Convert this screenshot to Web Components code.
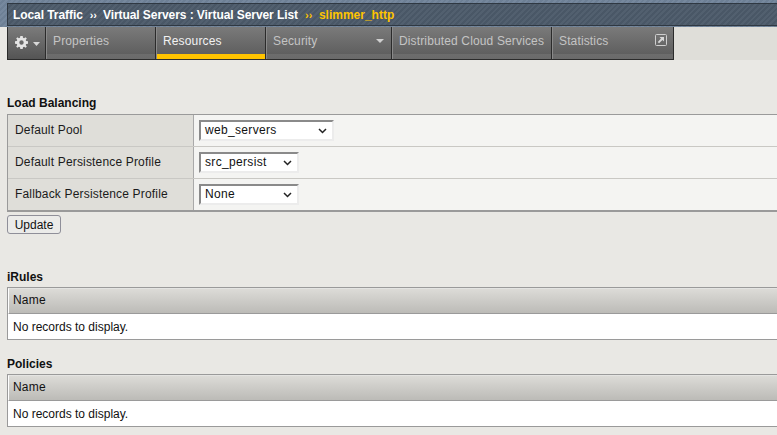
<!DOCTYPE html>
<html>
<head>
<meta charset="utf-8">
<title>Virtual Server List</title>
<style>
html,body{margin:0;padding:0;height:100%;overflow:hidden;}
body{background:#e9e8e4;font:12px "Liberation Sans",Arial,sans-serif;color:#111;}
page-content{display:block;padding:0 0 0 7px;}
</style>
</head>
<body>
<bigip-header>
	<crumb-item>Local Traffic</crumb-item>
	<crumb-item sep>Virtual Servers : Virtual Server List</crumb-item>
	<crumb-item sep current>slimmer_http</crumb-item>
</bigip-header>
<tab-bar>
	<gear-tab></gear-tab>
	<nav-tab width="110">Properties</nav-tab>
	<nav-tab width="110" active>Resources</nav-tab>
	<nav-tab width="126" menu>Security</nav-tab>
	<nav-tab width="160">Distributed Cloud Services</nav-tab>
	<nav-tab width="121" popout>Statistics</nav-tab>
</tab-bar>
<page-content>
	<section-title style="margin-top:36px;height:18px">Load Balancing</section-title>
	<form-table>
		<form-row label="Default Pool"><fake-select width="135">web_servers</fake-select></form-row>
		<form-row label="Default Persistence Profile"><fake-select width="100">src_persist</fake-select></form-row>
		<form-row label="Fallback Persistence Profile"><fake-select width="100">None</fake-select></form-row>
	</form-table>
	<plain-button>Update</plain-button>
	<section-title style="margin-top:36px">iRules</section-title>
	<list-table></list-table>
	<section-title style="margin-top:17px">Policies</section-title>
	<list-table></list-table>
</page-content>
<script>
const stripes=`repeating-linear-gradient(135deg,rgba(255,255,255,.035) 0 2px,rgba(0,0,0,.035) 2px 4px)`;

class BigipHeader extends HTMLElement{
	constructor(){
		super();
		this.attachShadow({mode:'open'}).innerHTML=`
<style>
:host{display:block;height:27px;box-sizing:border-box;padding:3px 0 0 7px;background:${stripes},#71849a;}
#bar{height:23px;box-sizing:border-box;border-top:1px solid #2f3842;border-bottom:1px solid #2f3842;border-left:1px solid #2f3842;margin-bottom:1px;
	background:${stripes},#4c5a6a;display:flex;align-items:center;padding-left:5px;
	color:#fff;font:bold 12px "Liberation Sans",Arial,sans-serif;}
</style>
<div id="bar"><slot></slot></div>`;
	}
}
customElements.define('bigip-header',BigipHeader);

class CrumbItem extends HTMLElement{
	constructor(){
		super();
		this.attachShadow({mode:'open'}).innerHTML=`
<style>
:host{display:inline-flex;align-items:center;letter-spacing:-.07px;}
:host([current]){color:#ffc400;letter-spacing:0;}
#sep{display:none;margin:0 6px 0 7px;font-size:11px;}
:host([sep]) #sep{display:inline;}
:host([current]) #sep{color:#ffc400;margin-right:6.5px;}
</style>
<span id="sep">››</span><slot></slot>`;
	}
}
customElements.define('crumb-item',CrumbItem);

class TabBar extends HTMLElement{
	constructor(){
		super();
		this.attachShadow({mode:'open'}).innerHTML=`
<style>
:host{display:flex;height:33px;box-sizing:border-box;margin-left:7px;background:#dfded9;}
#tabs{display:flex;height:33px;box-sizing:border-box;border:1px solid #2b2b2b;border-top:none;border-left:1px solid #2b2b2b;}
</style>
<div id="tabs"><slot></slot></div>`;
	}
}
customElements.define('tab-bar',TabBar);

class GearTab extends HTMLElement{
	constructor(){
		super();
		this.attachShadow({mode:'open'}).innerHTML=`
<style>
:host{display:flex;align-items:center;box-sizing:border-box;width:38px;padding:0 0 2px 7px;gap:5px;
	border-right:1px solid #2b2b2b;background:linear-gradient(#7b7b7b,#545454);}
svg{display:block;}
</style>
<svg width="13" height="13" viewBox="0 0 13 13"><path fill="#e4e4e4" d="M5.3 0h2.4l.3 1.8 1.1.5L10.600 1.200l1.200 1.200-1.100 1.500.5 1.100 1.800.3v2.400l-1.800.3-.5 1.100 1.100 1.500-1.200 1.200-1.500-1.100-1.100.5-.3 1.800H5.300l-.3-1.800-1.100-.5-1.500 1.100L1.200 10.600l1.100-1.500-.5-1.100L0 7.700V5.300l1.800-.3.5-1.100L1.200 2.400l1.200-1.200 1.500 1.100 1.100-.5zM6.500 4.300a2.200 2.200 0 1 0 0 4.400 2.200 2.200 0 0 0 0-4.400z"/></svg>
<svg width="7" height="4" viewBox="0 0 7 4" style="margin-top:3px"><path fill="#d8d8d8" d="M0 0h7L3.500 4z"/></svg>`;
	}
}
customElements.define('gear-tab',GearTab);

class NavTab extends HTMLElement{
	constructor(){
		super();
		this.attachShadow({mode:'open'}).innerHTML=`
<style>
:host{display:flex;box-sizing:border-box;position:relative;padding:0 0 0 6px;height:32px;align-items:flex-start;
	border-right:1px solid #2b2b2b;border-left:1px solid #8a8a8a;
	background:linear-gradient(#7a7a7a,#5f5f5f 27px,#6d6d6d 27px,#6a6a6a);
	color:#c4c4c4;font:12px "Liberation Sans",Arial,sans-serif;line-height:14px;letter-spacing:.14px;}
:host(:last-child){border-right:none;}
:host([active]){color:#f2f2f2;border-left-color:#8a8a8a;background:linear-gradient(#7a7a7a,#5f5f5f 27px,#ffc400 27px);}
#t{padding-top:7px;}
#caret{display:none;position:absolute;right:7px;top:12px;}
:host([menu]) #caret{display:block;}
#pop{display:none;position:absolute;right:6px;top:7px;}
:host([popout]) #pop{display:block;}
</style>
<span id="t"><slot></slot></span>
<svg id="caret" width="8" height="4" viewBox="0 0 8 4"><path fill="#d0d0d0" d="M0 0h8L4 4z"/></svg>
<svg id="pop" width="12" height="12" viewBox="0 0 12 12"><rect x=".5" y=".5" width="11" height="11" rx="1" fill="none" stroke="#cfcfcf"/><path fill="#d8d8d8" d="M4.500 3h4.500v4.500L7.500 6 4 9.300 2.800 8 6 4.500z"/></svg>`;
	}
	connectedCallback(){
		this.style.width=this.getAttribute('width')+'px';
	}
}
customElements.define('nav-tab',NavTab);

class SectionTitle extends HTMLElement{
	constructor(){
		super();
		this.attachShadow({mode:'open'}).innerHTML=`
<style>
:host{display:block;font:bold 12px "Liberation Sans",Arial,sans-serif;line-height:14px;color:#111;height:17px;}
</style>
<slot></slot>`;
	}
}
customElements.define('section-title',SectionTitle);

class FormTable extends HTMLElement{
	constructor(){
		super();
		this.attachShadow({mode:'open'}).innerHTML=`
<style>
:host{display:block;box-sizing:border-box;border:1px solid #9a9a9a;border-right:none;border-bottom:2px solid #9a9a9a;}
</style>
<slot></slot>`;
	}
}
customElements.define('form-table',FormTable);

class FormRow extends HTMLElement{
	constructor(){
		super();
		this.attachShadow({mode:'open'}).innerHTML=`
<style>
:host{display:grid;grid-template-columns:186px 1fr;height:32px;box-sizing:border-box;border-bottom:1px solid #c9c8c4;font:12px "Liberation Sans",Arial,sans-serif;}
:host(:last-child){height:31px;border-bottom:none;}
#l{background:#dfded9;border-right:1px solid #a9a9a9;padding:0 0 2px 7px;display:flex;align-items:center;color:#1b1b1b;letter-spacing:.17px;}
#v{background:#f4f4f2;padding-left:5px;display:flex;align-items:center;}
</style>
<div id="l"></div><div id="v"><slot></slot></div>`;
	}
	connectedCallback(){
		this.shadowRoot.getElementById('l').textContent=this.getAttribute('label');
	}
}
customElements.define('form-row',FormRow);

class FakeSelect extends HTMLElement{
	constructor(){
		super();
		this.attachShadow({mode:'open'}).innerHTML=`
<style>
:host{display:flex;align-items:center;position:relative;box-sizing:border-box;height:21px;padding:0 0 1px 4px;background:#fff;
	border:2px solid;border-color:#8a8a8a #ececec #ececec #8a8a8a;color:#111;font:12px "Liberation Sans",Arial,sans-serif;letter-spacing:.33px;}
svg{position:absolute;right:5px;top:6px;}
</style>
<slot></slot>
<svg width="9" height="6" viewBox="0 0 9 6"><path fill="none" stroke="#222" stroke-width="1.500" d="M1 1l3.500 3.500L8 1"/></svg>`;
	}
	connectedCallback(){
		this.style.width=this.getAttribute('width')+'px';
	}
}
customElements.define('fake-select',FakeSelect);

class PlainButton extends HTMLElement{
	constructor(){
		super();
		this.attachShadow({mode:'open'}).innerHTML=`
<style>
:host{display:flex;align-items:center;justify-content:center;box-sizing:border-box;width:54px;height:19px;margin-top:3px;
	border:1px solid #8f8f99;border-radius:3px;background:#ebebe9;color:#111;font:12px "Liberation Sans",Arial,sans-serif;}
</style>
<slot></slot>`;
	}
}
customElements.define('plain-button',PlainButton);

class ListTable extends HTMLElement{
	constructor(){
		super();
		this.attachShadow({mode:'open'}).innerHTML=`
<style>
:host{display:block;box-sizing:border-box;height:53px;border:1px solid #9a9a9a;border-right:none;font:12px "Liberation Sans",Arial,sans-serif;color:#111;background:#fff;}
#h{height:26px;box-sizing:border-box;border-bottom:1px solid #9a9a9a;border-left:1px solid #fff;border-top:1px solid #e4e4e2;padding:0 0 2px 4px;display:flex;align-items:center;background:linear-gradient(#dcdbd7,#bcbbb7);letter-spacing:.2px;}
#b{height:25px;padding-left:5px;display:flex;align-items:center;}
</style>
<div id="h">Name</div>
<div id="b">No records to display.</div>`;
	}
}
customElements.define('list-table',ListTable);
</script>
</body>
</html>
